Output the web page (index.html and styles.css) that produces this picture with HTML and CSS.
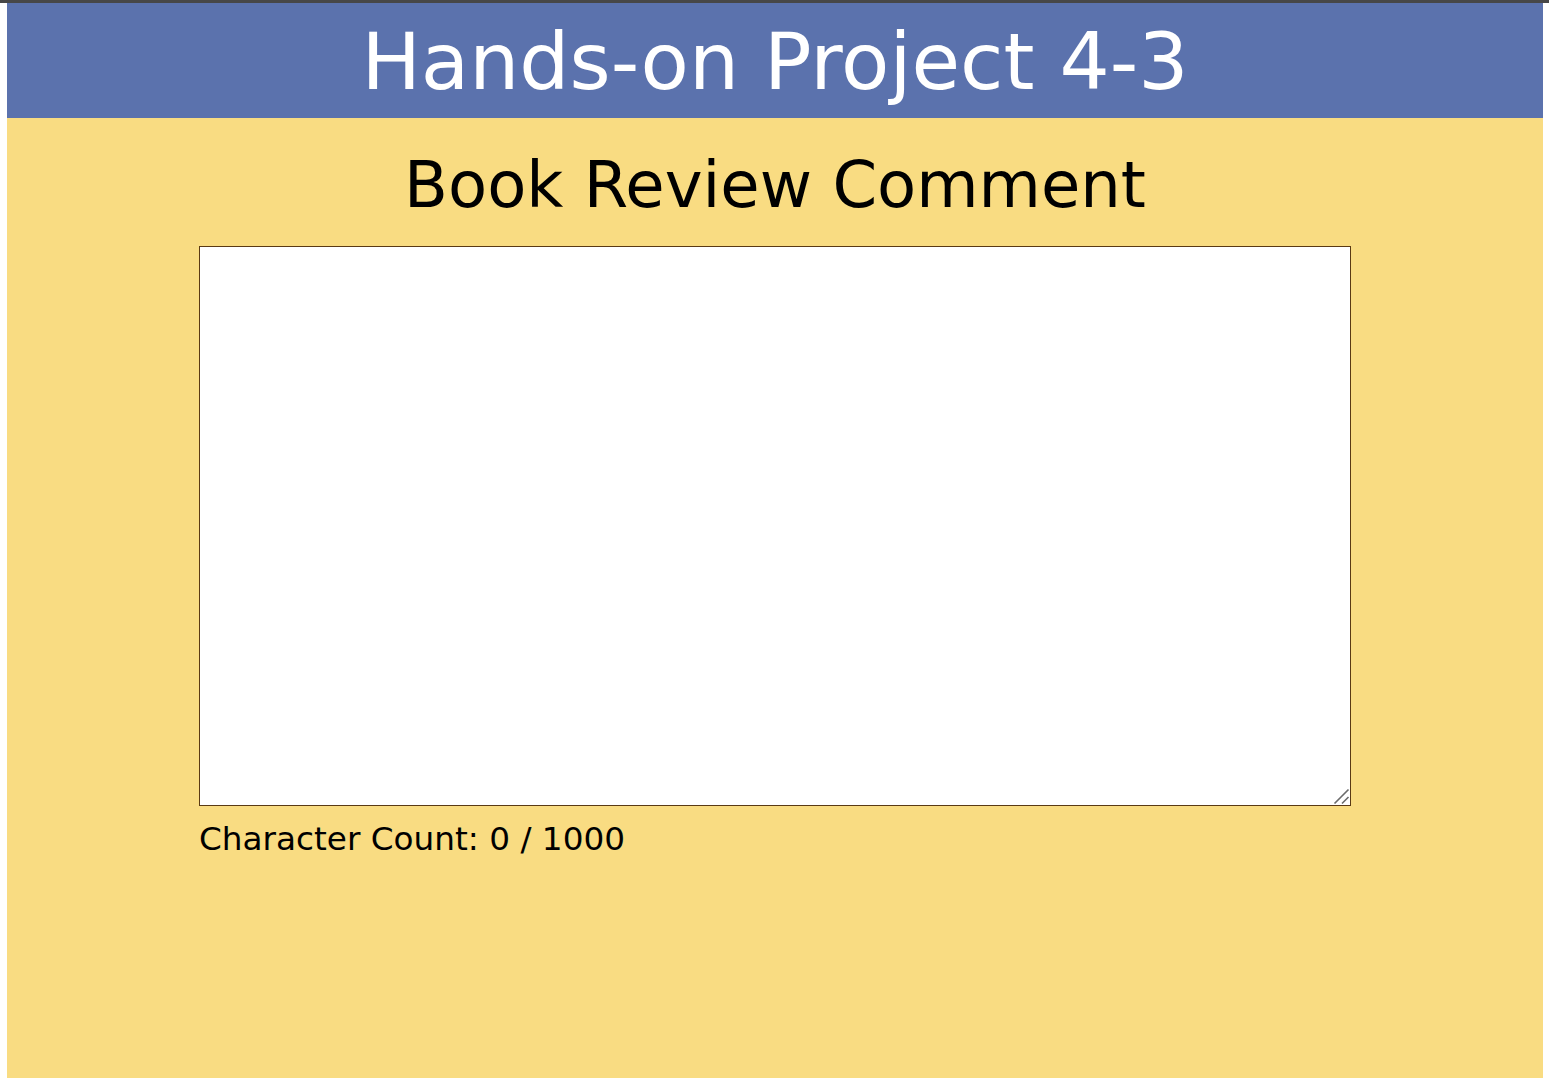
FILE: index.html
```html
<!DOCTYPE html>
<html lang="en">
<head>
<meta charset="utf-8">
<title>Hands-on Project 4-3</title>
<link rel="stylesheet" href="styles.css">
</head>
<body>
<div class="topline"></div>
<section class="page">
  <header class="banner">
    <h1>Hands-on Project 4-3</h1>
  </header>
  <article class="review">
    <h2>Book Review Comment</h2>
    <div class="field">
      <div class="box">
        <textarea class="comment" aria-label="Comment"></textarea>
        <svg class="grip" width="18" height="18" viewBox="0 0 18 18" aria-hidden="true">
          <path d="M2.5 16.5 L16.5 2.5 M10 16.5 L16.5 10" stroke="#6b6b6b" stroke-width="1.6" fill="none"/>
        </svg>
      </div>
      <p class="count">Character Count: <span>0</span> / 1000</p>
    </div>
  </article>
</section>
</body>
</html>
```
FILE: styles.css
```css
html, body {
  margin: 0;
  padding: 0;
  background: #ffffff;
}

body {
  font-family: "DejaVu Sans", Verdana, sans-serif;
  padding-bottom: 10px;
}

.topline {
  height: 3px;
  background: #474747;
}

.page {
  margin: 0 6px 0 7px;
  height: 1075px;
  background: #f9dc82;
  display: flex;
  flex-direction: column;
}

.banner {
  background: #5b72ad;
  height: 115px;
  display: flex;
  align-items: center;
  justify-content: center;
}

.banner h1 {
  margin: 3px 0 0;
  color: #ffffff;
  font-weight: normal;
  font-size: 79px;
  line-height: 1;
}

.review {
  display: flex;
  flex-direction: column;
  align-items: center;
}

.review h2 {
  margin: 27px 0 0;
  font-weight: normal;
  font-size: 64px;
  line-height: 80px;
  color: #000000;
}

.field {
  width: 75%;
  margin-top: 21px;
}

.box {
  position: relative;
}

.comment {
  display: block;
  box-sizing: border-box;
  width: 100%;
  height: 560px;
  margin: 0;
  border: 1px solid #5a3a14;
  background: #ffffff;
  resize: none;
}

/* resize grip drawn in the lower-right corner */
.grip {
  position: absolute;
  right: 1px;
  bottom: 1px;
  pointer-events: none;
}

.count {
  margin: 14px 0 0;
  font-size: 32.7px;
  line-height: 38px;
  color: #000000;
}
```
